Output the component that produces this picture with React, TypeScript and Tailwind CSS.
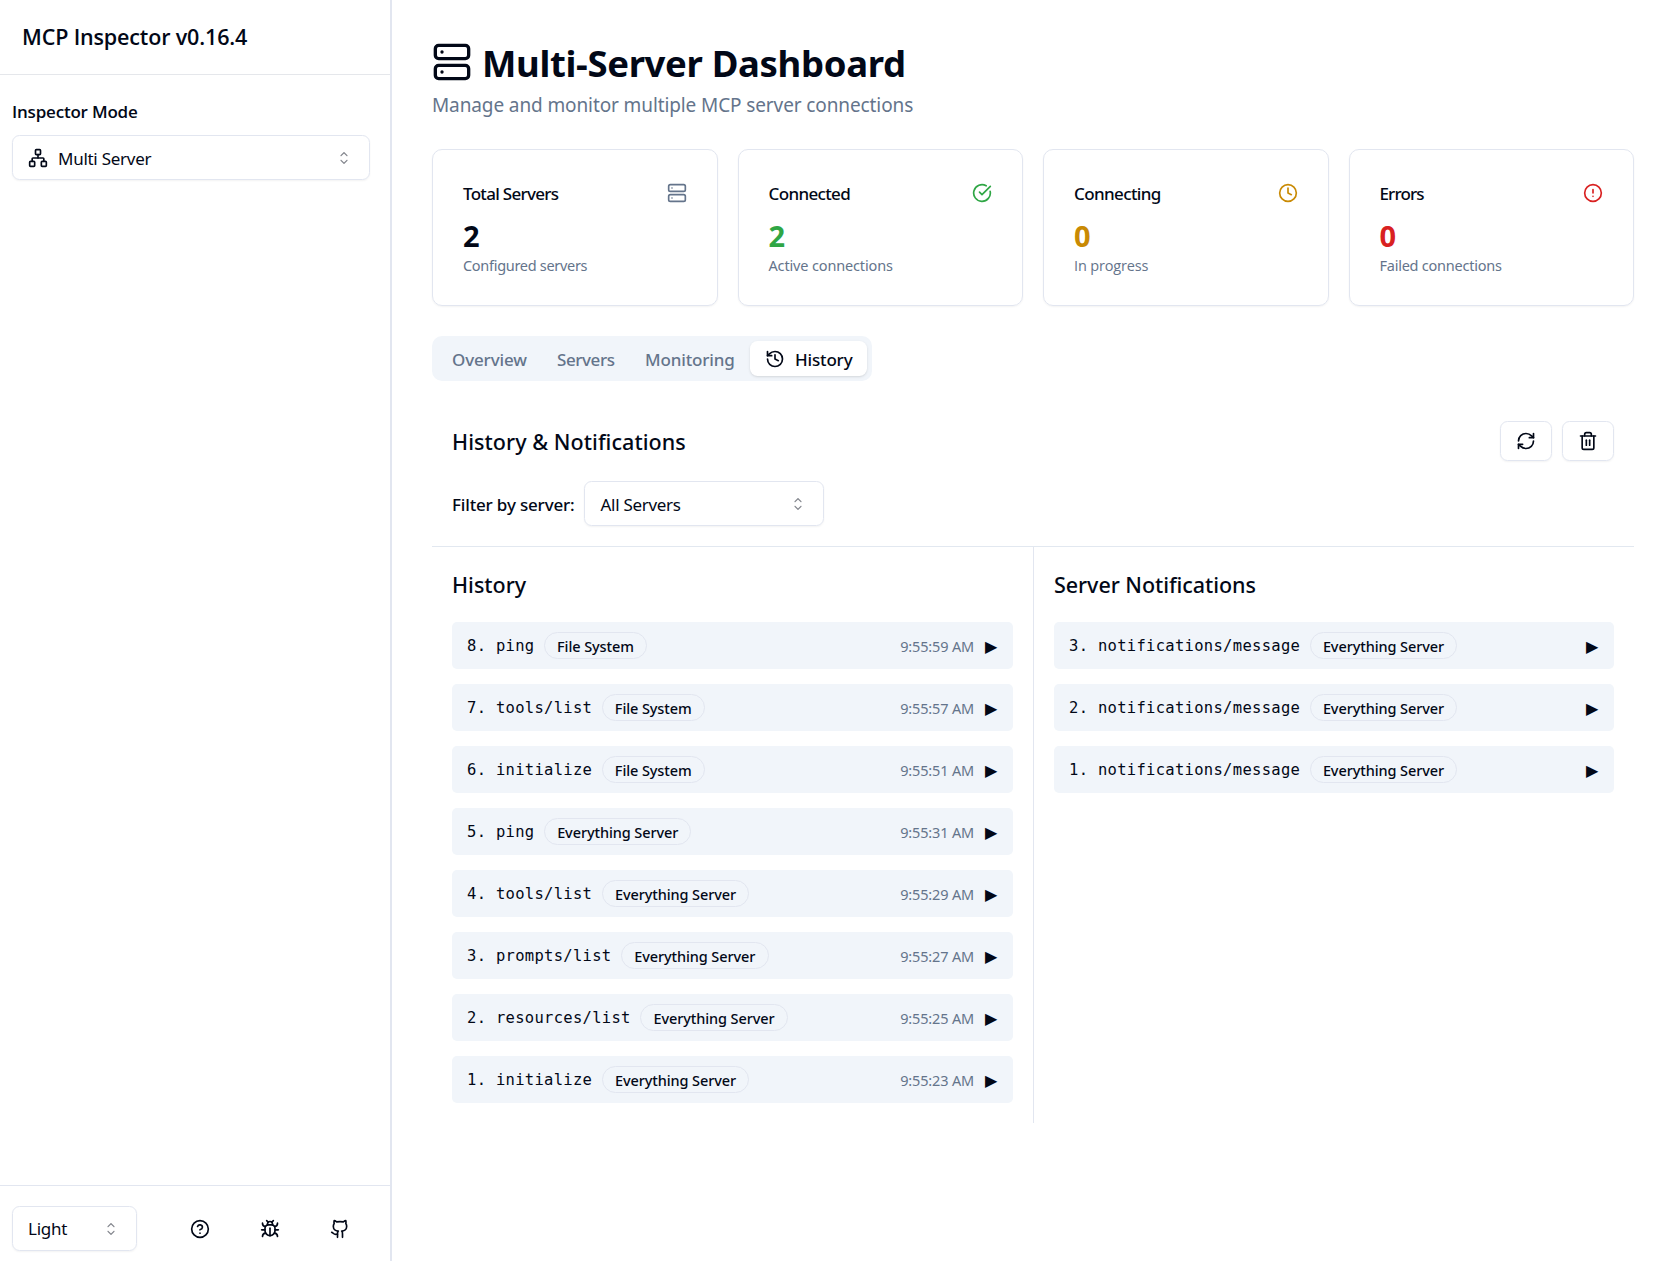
import type { ReactNode } from "react";
import {
  Bug,
  CircleAlert,
  CircleCheckBig,
  CircleQuestionMark,
  Clock,
  Github,
  History,
  Network,
  RefreshCw,
  Server,
  Trash2,
} from "lucide-react";

function CaretSort() {
  return (
    <svg viewBox="0 0 15 15" className="size-5 shrink-0 opacity-50" fill="currentColor">
      <path d="M4.93179 5.43179C4.75605 5.60753 4.75605 5.89245 4.93179 6.06819C5.10753 6.24392 5.39245 6.24392 5.56819 6.06819L7.49999 4.13638L9.43179 6.06819C9.60753 6.24392 9.89245 6.24392 10.0682 6.06819C10.2439 5.89245 10.2439 5.60753 10.0682 5.43179L7.81819 3.18179C7.73379 3.0974 7.61933 3.04999 7.49999 3.04999C7.38064 3.04999 7.26618 3.0974 7.18179 3.18179L4.93179 5.43179ZM10.0682 9.56819C10.2439 9.39245 10.2439 9.10753 10.0682 8.93179C9.89245 8.75606 9.60753 8.75606 9.43179 8.93179L7.49999 10.8636L5.56819 8.93179C5.39245 8.75606 5.10753 8.75606 4.93179 8.93179C4.75605 9.10753 4.75605 9.39245 4.93179 9.56819L7.18179 11.8182C7.35753 11.9939 7.64245 11.9939 7.81819 11.8182L10.0682 9.56819Z" />
    </svg>
  );
}

function SelectBox({ className, children }: { className: string; children: ReactNode }) {
  return (
    <button
      className={`flex h-[45px] items-center justify-between rounded-[7.5px] border border-[#e2e6f0] px-[15px] text-[17px] shadow-xs ${className}`}
    >
      {children}
      <CaretSort />
    </button>
  );
}

const stats = [
  {
    title: "Total Servers", titleClass: "tracking-[-0.7px]", value: 2, color: "text-[#020817]",
    note: "Configured servers", noteClass: "tracking-[-0.3px]",
    icon: <Server className="size-5 text-[#64748b]" />,
  },
  {
    title: "Connected", titleClass: "tracking-[-0.65px]", value: 2, color: "text-[#2fa645]",
    note: "Active connections", noteClass: "tracking-[-0.15px]",
    icon: <CircleCheckBig className="size-5 text-[#2fa645]" />,
  },
  {
    title: "Connecting", titleClass: "tracking-[-0.62px]", value: 0, color: "text-[#c98a04]",
    note: "In progress", noteClass: "font-['Open_Sans'] pt-px tracking-[-0.15px]",
    icon: <Clock className="size-5 text-[#c98a04]" />,
  },
  {
    title: "Errors", titleClass: "tracking-[-0.86px]", value: 0, color: "text-[#d92121]",
    note: "Failed connections", noteClass: "tracking-[-0.24px]",
    icon: <CircleAlert className="size-5 text-[#d92121]" />,
  },
];

const history = [
  [8, "ping", "File System", "9:55:59 AM"],
  [7, "tools/list", "File System", "9:55:57 AM"],
  [6, "initialize", "File System", "9:55:51 AM"],
  [5, "ping", "Everything Server", "9:55:31 AM"],
  [4, "tools/list", "Everything Server", "9:55:29 AM"],
  [3, "prompts/list", "Everything Server", "9:55:27 AM"],
  [2, "resources/list", "Everything Server", "9:55:25 AM"],
  [1, "initialize", "Everything Server", "9:55:23 AM"],
] as const;

const notifications = [3, 2, 1];

function Row({ n, method, server, time }: { n: number; method: string; server: string; time?: string }) {
  return (
    <li className="flex h-[47px] items-center justify-between rounded-[5px] bg-[#f1f5fa] px-[15px]">
      <div className="flex items-center gap-[9.5px]">
        <span className="pt-[3px] font-['DejaVu_Sans_Mono',monospace] text-[15.5px] tracking-[0.3px]">
          {n}. {method}
        </span>
        <span
          className={`flex h-[27px] items-center justify-center rounded-full border border-[#e2e6f0] pt-0.5 text-[14.5px] font-medium tracking-[-0.1px] ${
            server === "File System" ? "w-[103px]" : "w-[147.5px]"
          }`}
        >
          {server}
        </span>
      </div>
      <div className="flex items-center gap-2.5">
        {time && (
          <span className="pt-0.5 text-[14.5px] tracking-[-0.16px] text-[#64748b]">{time}</span>
        )}
        <span className="w-[14px] pl-[0.5px] font-['Open_Sans',sans-serif] text-[16px] leading-5">▶</span>
      </div>
    </li>
  );
}

export default function App() {
  return (
    <div className="flex h-[1261px] w-[1663px] overflow-hidden bg-white font-['Noto_Sans',sans-serif] text-[#020817]">
      <aside className="flex w-[392px] shrink-0 flex-col border-r-2 border-[#e2e6f0]">
        <header className="flex h-[75px] items-center border-b border-[#e5e7eb] pl-[22px]">
          <h1 className="font-['Open_Sans'] text-[21.5px] font-semibold tracking-[-0.15px]">MCP Inspector v0.16.4</h1>
        </header>
        <div className="flex flex-1 flex-col px-3 pt-[25px]">
          <label className="h-[35px] font-['Open_Sans'] text-[17px] leading-6 font-semibold tracking-[-0.2px]">
            Inspector Mode
          </label>
          <SelectBox className="w-[358px]">
            <span className="flex items-center gap-2.5">
              <Network className="size-5" />
              <span className="pt-0.5 tracking-[-0.27px]">Multi Server</span>
            </span>
          </SelectBox>
        </div>
        <footer className="flex h-[76px] items-start border-t border-[#e2e6f0] pt-5 pl-3">
          <SelectBox className="w-[125px]">
            <span className="pt-px tracking-[-0.25px]">Light</span>
          </SelectBox>
          <div className="ml-[53px] flex h-[45px] items-center gap-[50px]">
            <CircleQuestionMark className="size-5" />
            <Bug className="size-5" />
            <Github className="size-5" />
          </div>
        </footer>
      </aside>

      <main className="w-[1242px] pt-10 pl-10">
        <h2 className="flex h-[45px] items-center gap-2.5 text-[36.5px] font-bold tracking-[-0.34px]">
          <Server className="mb-0.5 size-10" />
          <span className="pt-0.5">Multi-Server Dashboard</span>
        </h2>
        <p className="mt-[5px] h-[29px] text-[19px] leading-[30px] tracking-[-0.11px] text-[#64748b]">
          Manage and monitor multiple MCP server connections
        </p>

        <div className="mt-[30px] grid grid-cols-4 gap-5">
          {stats.map((s) => (
            <div key={s.title} className="h-[157px] rounded-[10px] border border-[#e2e6f0] p-[30px] shadow-xs">
              <div className="flex h-[26px] items-center justify-between">
                <span className={`pt-0.5 text-[17px] font-medium ${s.titleClass}`}>{s.title}</span>
                {s.icon}
              </div>
              <div className={`mt-[9px] h-10 text-[29px] leading-[42px] font-bold ${s.color}`}>{s.value}</div>
              <div className={`text-[14.5px] leading-5 text-[#64748b] ${s.noteClass}`}>{s.note}</div>
            </div>
          ))}
        </div>

        <div className="mt-[30px] flex h-[45px] w-[440px] items-center rounded-[10px] bg-[#f1f5fa] pl-[5px] text-[17px] font-medium text-[#64748b]">
          <span className="w-[105px] pt-0.5 pl-[15px] tracking-[-0.15px]">Overview</span>
          <span className="w-[88px] pt-0.5 pl-[15px] tracking-[-0.42px]">Servers</span>
          <span className="w-[120px] pt-0.5 pl-[15px] tracking-[-0.15px]">Monitoring</span>
          <span className="flex h-[35px] w-[117px] items-center gap-2.5 rounded-[7.5px] bg-white pl-[15px] text-[#020817] shadow-sm">
            <History className="size-5" />
            <span className="pt-0.5 tracking-[-0.17px]">History</span>
          </span>
        </div>

        <section className="mt-5">
          <div className="h-[146px] border-b border-[#e2e8f0] px-5 pt-5">
            <div className="flex h-10 items-center justify-between">
              <h3 className="pt-0.5 text-[21.5px] font-medium tracking-[0.06px]">History &amp; Notifications</h3>
              <div className="flex gap-2.5">
                <button className="flex h-10 w-[52px] items-center justify-center rounded-[7.5px] border border-[#e2e6f0] shadow-xs">
                  <RefreshCw className="size-5" />
                </button>
                <button className="flex h-10 w-[52px] items-center justify-center rounded-[7.5px] border border-[#e2e6f0] shadow-xs">
                  <Trash2 className="size-5" />
                </button>
              </div>
            </div>
            <div className="mt-5 flex items-center">
              <span className="w-[132px] pt-0.5 text-[17px] font-medium tracking-[-0.17px]">Filter by server:</span>
              <SelectBox className="w-[240px]">
                <span className="pt-0.5 pl-[0.5px] tracking-[-0.29px]">All Servers</span>
              </SelectBox>
            </div>
          </div>
          <div className="grid h-[576px] grid-cols-[602px_1fr]">
            <div className="border-r border-[#e2e6f0] p-5">
              <h3 className="mb-5 h-[35px] text-[21.5px] leading-[35px] font-medium">History</h3>
              <ul className="space-y-[15px]">
                {history.map(([n, method, server, time]) => (
                  <Row key={n} n={n} method={method} server={server} time={time} />
                ))}
              </ul>
            </div>
            <div className="p-5">
              <h3 className="mb-5 h-[35px] text-[21.5px] leading-[35px] font-medium tracking-[-0.05px]">
                Server Notifications
              </h3>
              <ul className="space-y-[15px]">
                {notifications.map((n) => (
                  <Row key={n} n={n} method="notifications/message" server="Everything Server" />
                ))}
              </ul>
            </div>
          </div>
        </section>
      </main>
    </div>
  );
}
